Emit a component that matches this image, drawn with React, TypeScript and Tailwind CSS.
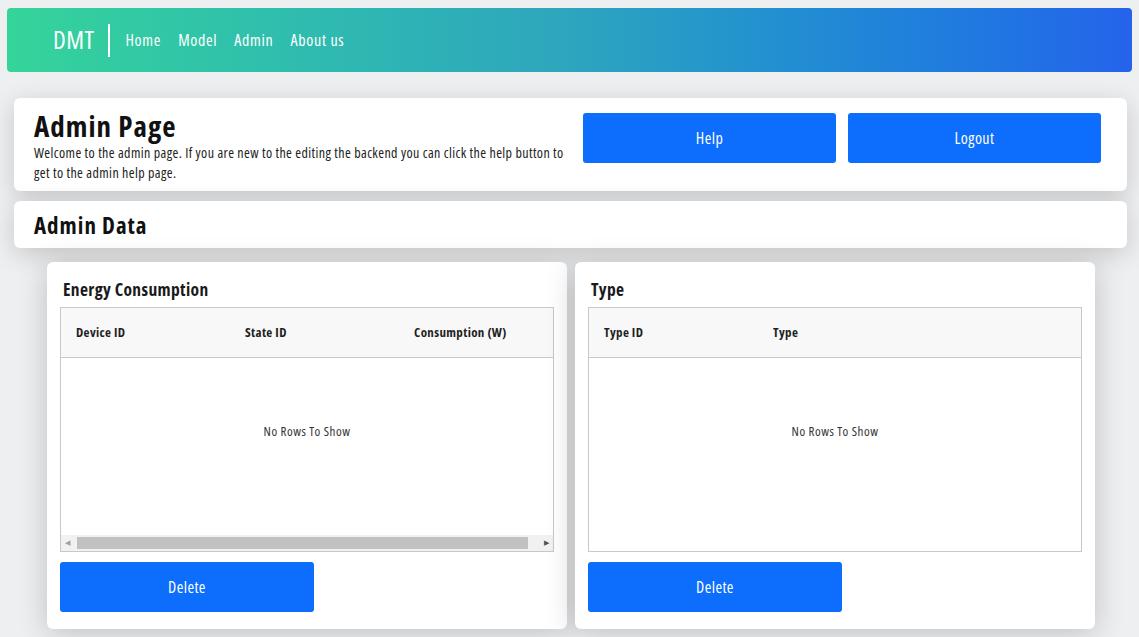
import { ReactNode } from "react";

const font = { fontFamily: '"Open Sans", "Noto Sans", sans-serif' };

const NavLink = ({ children }: { children: ReactNode }) => (
  <a className="text-[16px] text-white tracking-[0.7px] cursor-pointer">{children}</a>
);

const BlueButton = ({ label, className }: { label: string; className?: string }) => (
  <button
    className={
      "h-[50px] rounded-[3px] bg-[#0d6efd] text-white text-[16px] tracking-[0.4px] " +
      (className ?? "")
    }
  >
    {label}
  </button>
);

// Tabla vacía estilo ag-grid
const EmptyGrid = ({ columns, scroll }: { columns: string[]; scroll?: boolean }) => (
  <div className="h-[245px] border border-[#c8c8cc] flex flex-col bg-white overflow-hidden">
    <div className="h-[50px] shrink-0 bg-[#f8f8f8] border-b border-[#c8c8cc] flex items-center">
      {columns.map((c) => (
        <div
          key={c}
          className="w-[169px] shrink-0 pl-[15px] text-[13px] font-bold text-[#1f1f1f] tracking-[0.35px]"
        >
          {c}
        </div>
      ))}
    </div>
    <div className="flex-1 flex justify-center pt-[64px] text-[13px] text-[#333] tracking-[0.5px]">
      No Rows To Show
    </div>
    {scroll && (
      <div className="h-[16px] shrink-0 bg-[#f1f1f1] flex items-center px-[4px]">
        <span className="text-[7px] text-[#a0a0a0]">◀</span>
        <div className="flex-1 h-[12px] pl-[7px] pr-[16px]">
          <div className="h-full bg-[#c1c1c1]" />
        </div>
        <span className="text-[7px] text-[#505050]">▶</span>
      </div>
    )}
  </div>
);

const DataCard = ({
  title,
  columns,
  scroll,
}: {
  title: string;
  columns: string[];
  scroll?: boolean;
}) => (
  <div className="w-[520px] bg-white rounded-[6px] shadow-[0_4px_30px_rgba(0,0,0,0.2)] px-[13px] pt-[16px] pb-[17px] flex flex-col">
    <h3 className="text-[17.5px] font-bold text-[#1a1a1a] tracking-[0.35px] h-[29px] leading-[22px] pl-[3px]">
      {title}
    </h3>
    <EmptyGrid columns={columns} scroll={scroll} />
    <BlueButton label="Delete" className="w-[254px] mt-[10px]" />
  </div>
);

export default function App() {
  return (
    <div className="min-h-[637px] bg-[#eeeff1] pt-[8px] [font-stretch:75%]" style={font}>
      {/* Navbar */}
      <nav className="mx-[7px] h-[64px] rounded-[4px] bg-gradient-to-r from-[#35d49a] via-[#2ea5be] to-[#2563eb] flex items-center pl-[46px]">
        <span className="text-[25px] text-white tracking-[0.5px]">DMT</span>
        <div className="w-[2px] h-[33px] bg-white ml-[14px] mr-[15px]" />
        <div className="flex gap-[17px]">
          <NavLink>Home</NavLink>
          <NavLink>Model</NavLink>
          <NavLink>Admin</NavLink>
          <NavLink>About us</NavLink>
        </div>
      </nav>

      <div className="ml-[14px] mr-[12px] mt-[26px] flex flex-col gap-[10px]">
        {/* Admin Page header */}
        <div className="h-[93px] bg-white rounded-[6px] shadow-[0_6px_24px_rgba(0,0,0,0.17)] flex pl-[20px] pr-[26px] pt-[11px]">
          <div className="w-[540px]">
            <h1 className="text-[29px] font-bold text-[#111] leading-[34px] tracking-[1px]">
              Admin Page
            </h1>
            <p className="text-[14px] text-[#222] leading-[20px] mt-[0px] tracking-[0.4px]">
              Welcome to the admin page. If you are new to the editing the backend you can click the
              help button to get to the admin help page.
            </p>
          </div>
          <div className="ml-auto flex gap-[12px] pt-[4px]">
            <BlueButton label="Help" className="w-[253px]" />
            <BlueButton label="Logout" className="w-[253px]" />
          </div>
        </div>

        {/* Admin Data */}
        <div className="h-[47px] bg-white rounded-[6px] shadow-[0_6px_24px_rgba(0,0,0,0.17)] flex items-center pl-[20px]">
          <h2 className="text-[23px] font-bold text-[#111] tracking-[1px] mt-[2px]">Admin Data</h2>
        </div>
      </div>

      {/* Tablas */}
      <div className="ml-[47px] w-[1048px] mt-[14px] flex gap-[8px] pb-[9px]">
        <DataCard
          title="Energy Consumption"
          columns={["Device ID", "State ID", "Consumption (W)"]}
          scroll
        />
        <DataCard title="Type" columns={["Type ID", "Type"]} />
      </div>
    </div>
  );
}
